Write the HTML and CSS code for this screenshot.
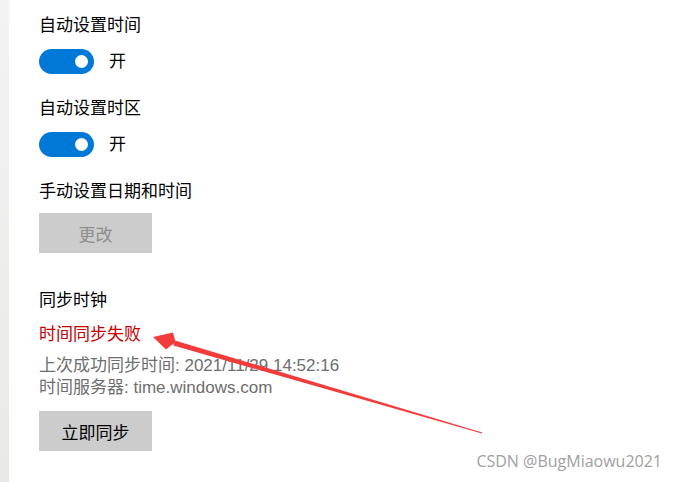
FILE: index.html
```html
<!DOCTYPE html>
<html lang="zh-CN">
<head>
    <meta charset="UTF-8">
    <meta name="viewport" content="width=device-width, initial-scale=1.0">
    <title>日期和时间</title>
    <link rel="stylesheet" href="styles.css">
</head>
<body>
    <div class="page">
        <div class="sidebar"></div>
        <div class="settings">
            <div class="label first">自动设置时间</div>
            <div class="switch-row">
                <span class="switch on"><span class="knob"></span></span>
                <span class="switch-text">开</span>
            </div>

            <div class="label">自动设置时区</div>
            <div class="switch-row">
                <span class="switch on"><span class="knob"></span></span>
                <span class="switch-text">开</span>
            </div>

            <div class="label">手动设置日期和时间</div>
            <button class="btn" disabled>更改</button>

            <div class="label section">同步时钟</div>
            <div class="status error">时间同步失败</div>
            <div class="info">上次成功同步时间: 2021/11/29 14:52:16</div>
            <div class="info">时间服务器: time.windows.com</div>
            <button class="btn sync">立即同步</button>
        </div>

        <!-- annotation arrow -->
        <svg class="arrow" width="674" height="482" viewBox="0 0 674 482">
            <polygon fill="#f23c3c" points="173.3,345.6 481.9,433.6 482.1,432.4 174.9,340.4"/>
            <polygon fill="#f23c3c" points="153,337 173,332.5 175.5,342 166,349.5"/>
        </svg>

        <div class="watermark">CSDN @BugMiaowu2021</div>
    </div>
</body>
</html>
```

FILE: styles.css
```css
body {
    margin: 0;
    background: #ffffff;
    font-family: "Liberation Sans", "Noto Sans CJK SC", sans-serif;
    color: #000000;
}
.page {
    position: relative;
    display: flex;
    width: 674px;
    height: 482px;
    overflow: hidden;
}
.sidebar {
    width: 9px;
    flex-shrink: 0;
    background: linear-gradient(to bottom, #f3f3f3, #ebe9e7);
}
.settings {
    display: flex;
    flex-direction: column;
    align-items: flex-start;
    padding-left: 30px;
}
.label {
    font-size: 17px;
    line-height: 24px;
    margin-top: 23px;
}
.label.first {
    margin-top: 14px;
}
.label.section {
    margin-top: 36px;
}
.switch-row {
    display: flex;
    align-items: center;
    margin-top: 11px;
}
.switch {
    display: flex;
    align-items: center;
    justify-content: flex-end;
    box-sizing: border-box;
    width: 55px;
    height: 25px;
    padding-right: 6px;
    border-radius: 13px;
    background: #0078d7;
}
.knob {
    width: 13px;
    height: 13px;
    border-radius: 50%;
    background: #ffffff;
}
.switch-text {
    margin-left: 15px;
    font-size: 17px;
    line-height: 24px;
}
.btn {
    margin-top: 9px;
    width: 113px;
    height: 40px;
    border: none;
    padding: 0;
    background: #cccccc;
    font-family: inherit;
    font-size: 17px;
    color: #000000;
}
.btn:disabled {
    color: #8c8c8c;
}
.btn.sync {
    margin-top: 12px;
}
.status {
    font-size: 17px;
    line-height: 24px;
    margin-top: 10px;
}
.error {
    color: #c50000;
}
.info {
    font-size: 17px;
    line-height: 22px;
    color: #6e6e6e;
}
.status + .info {
    margin-top: 8px;
}
.arrow {
    position: absolute;
    left: 0;
    top: 0;
    pointer-events: none;
}
.watermark {
    position: absolute;
    right: 12px;
    bottom: 10px;
    font-family: "Open Sans", sans-serif;
    font-size: 16px;
    color: #a0a0a0;
}
```
